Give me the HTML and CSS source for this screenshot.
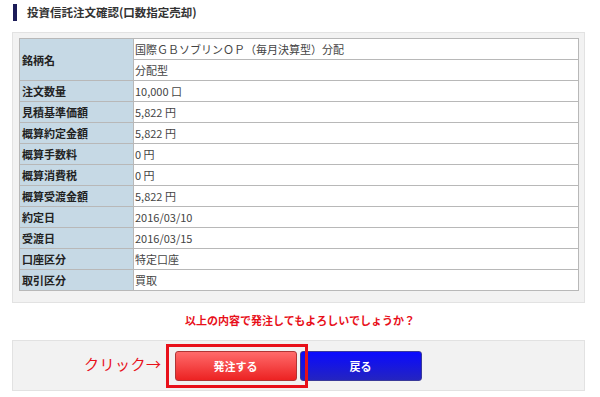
FILE: index.html
```html
<!DOCTYPE html>
<html lang="ja">

<head>
    <meta charset="UTF-8">
    <meta name="viewport" content="width=device-width, initial-scale=1.0">
    <title>投資信託注文確認</title>
    <link rel="stylesheet" href="styles.css">
</head>

<body>
    <h1 class="title">投資信託注文確認(口数指定売却)</h1>

    <div class="panel">
        <table class="order">
            <tr>
                <th rowspan="2">銘柄名</th>
                <td>国際ＧＢソブリンＯＰ（毎月決算型）分配</td>
            </tr>
            <tr>
                <td>分配型</td>
            </tr>
            <tr>
                <th>注文数量</th>
                <td>10,000 口</td>
            </tr>
            <tr>
                <th>見積基準価額</th>
                <td>5,822 円</td>
            </tr>
            <tr>
                <th>概算約定金額</th>
                <td>5,822 円</td>
            </tr>
            <tr>
                <th>概算手数料</th>
                <td>0 円</td>
            </tr>
            <tr>
                <th>概算消費税</th>
                <td>0 円</td>
            </tr>
            <tr>
                <th>概算受渡金額</th>
                <td>5,822 円</td>
            </tr>
            <tr>
                <th>約定日</th>
                <td>2016/03/10</td>
            </tr>
            <tr>
                <th>受渡日</th>
                <td>2016/03/15</td>
            </tr>
            <tr>
                <th>口座区分</th>
                <td>特定口座</td>
            </tr>
            <tr>
                <th>取引区分</th>
                <td>買取</td>
            </tr>
        </table>
    </div>

    <p class="confirm">以上の内容で発注してもよろしいでしょうか？</p>

    <div class="actions">
        <span class="hint">クリック→</span>
        <div class="submit-wrap">
            <button type="button" class="btn btn-red">発注する</button>
            <span class="mark"></span>
        </div>
        <button type="button" class="btn btn-blue">戻る</button>
    </div>
</body>

</html>
```

FILE: styles.css
```css
* {
    margin: 0;
    padding: 0;
    box-sizing: border-box;
}

body {
    width: 600px;
    background-color: #fff;
    font-family: "Noto Sans CJK JP", "Noto Sans", sans-serif;
    font-size: 11px;
    color: #333;
}

.title {
    margin: 4px 0 0 13px;
    height: 17px;
    padding-left: 10px;
    border-left: 4px solid #1c1c58;
    font-size: 11.5px;
    font-weight: bold;
    line-height: 17px;
    color: #333;
}

.panel {
    margin: 11px 15px 0 12px;
    padding: 5px 5px 11px 6px;
    background-color: #f2f2f2;
    border: 1px solid #e2e2e2;
}

.order {
    width: 100%;
    border-collapse: collapse;
    background-color: #fff;
}

.order th,
.order td {
    height: 21px;
    border: 1px solid #b8b8b8;
    text-align: left;
    vertical-align: middle;
    line-height: 14px;
}

.order th {
    width: 114px;
    padding-left: 2px;
    background-color: #c6d9e5;
    font-weight: bold;
    color: #222;
}

.order td {
    padding-left: 1px;
    color: #444;
}

.confirm {
    margin-top: 10px;
    text-align: center;
    font-size: 11px;
    font-weight: bold;
    line-height: 14px;
    color: #e8101a;
}

.actions {
    display: flex;
    align-items: center;
    margin: 13px 15px 0 12px;
    height: 51px;
    padding-left: 71px;
    background-color: #f2f2f2;
    border: 1px solid #e2e2e2;
}

.hint {
    font-size: 15px;
    color: #e8101a;
    letter-spacing: 0.5px;
    margin-right: 13px;
    margin-bottom: 5px;
}

.submit-wrap {
    position: relative;
}

.btn {
    display: block;
    width: 122px;
    height: 30px;
    border-radius: 3px;
    font-family: inherit;
    font-size: 11px;
    font-weight: bold;
    color: #fff;
    cursor: pointer;
}

.btn-red {
    background: linear-gradient(#ff6b6b, #ec2222);
    border: 1px solid #b03535;
}

.btn-blue {
    margin-left: 3px;
    background: linear-gradient(#0a0aff, #2424c0);
    border: 1px solid #3a3a9a;
}

.mark {
    position: absolute;
    left: -9px;
    top: -7px;
    width: 142px;
    height: 44px;
    border: 3px solid #e8101a;
}
```
